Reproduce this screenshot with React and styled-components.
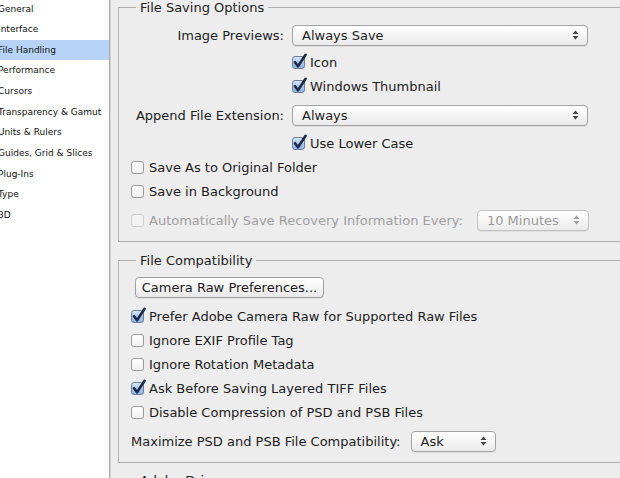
import React from 'react';
import styled, { createGlobalStyle } from 'styled-components';

const GlobalStyle = createGlobalStyle`
  html, body {
    margin: 0;
    padding: 0;
    background: #ededed;
  }
  body {
    font-family: "DejaVu Sans", "Liberation Sans", sans-serif;
    color: #1c1c1c;
  }
`;

const Window = styled.div`
  display: flex;
  width: 620px;
  height: 478px;
  overflow: hidden;
  background: #ededed;
`;

const Sidebar = styled.ul`
  list-style: none;
  margin: 0;
  padding: 0;
  width: 109px;
  flex: none;
  background: #fff;
  border-right: 1px solid #a9a9a9;
  box-shadow: 1px 0 0 #d6d6d6;
`;

const SideItem = styled.li`
  height: 20.67px;
  line-height: 20.67px;
  margin-left: -2px;
  font-size: 9px;
  white-space: nowrap;
  color: #111;
  background: ${p => (p.active ? '#b7d3f6' : 'transparent')};
  &:first-child {
    margin-top: -1.5px;
  }
`;

const Main = styled.div`
  flex: 1;
  min-width: 0;
  padding-left: 8px;
  overflow: hidden;
`;

const Group = styled.fieldset`
  margin: ${p => p.top || 0}px -40px 0 0;
  padding: 0;
  border: 1px solid #adadad;
  border-left-color: #b4b4b4;
  min-width: 0;
`;

const Legend = styled.legend`
  margin-left: 17px;
  padding: 0 4px;
  font-size: 13px;
  line-height: 15px;
  color: #1c1c1c;
`;

const Body = styled.div`
  display: flex;
  flex-direction: column;
  padding: ${p => p.pt}px 0 ${p => p.pb}px 12px;
`;

const FieldRow = styled.div`
  display: flex;
  align-items: center;
  height: 22px;
  margin-top: ${p => p.gap || 0}px;
  font-size: 13px;
  color: ${p => (p.disabled ? '#9a9a9a' : '#1c1c1c')};
`;

const FieldLabel = styled.span`
  width: ${p => (p.w ? `${p.w}px` : 'auto')};
  flex: none;
  text-align: right;
  white-space: nowrap;
`;

const SelectBox = styled.div`
  display: flex;
  align-items: center;
  justify-content: space-between;
  box-sizing: border-box;
  width: ${p => p.w}px;
  height: 21px;
  margin-left: ${p => p.ml || 8}px;
  padding: 0 8px 0 9px;
  border: 1px solid ${p => (p.disabled ? '#c2c2c2' : '#a2a2a2')};
  border-radius: 4px;
  background: linear-gradient(#ffffff, #f3f3f3 60%, #eaeaea);
  box-shadow: 0 1px 0 rgba(0, 0, 0, 0.06);
  font-size: 13px;
  color: ${p => (p.disabled ? '#9a9a9a' : '#1c1c1c')};
`;

const CheckRow = styled.label`
  display: flex;
  align-items: center;
  height: 24px;
  margin-top: ${p => p.gap || 0}px;
  padding-left: ${p => p.indent || 0}px;
  font-size: 13px;
  white-space: nowrap;
  color: ${p => (p.disabled ? '#a0a0a0' : '#1c1c1c')};
`;

const Box = styled.span`
  position: relative;
  box-sizing: border-box;
  width: 13px;
  height: 13px;
  flex: none;
  margin-right: 5px;
  border: 1px solid ${p => (p.disabled ? '#cdcdcd' : p.checked ? '#6f7f95' : '#9a9a9a')};
  border-radius: 3px;
  background: ${p =>
    p.checked
      ? 'linear-gradient(#d7e6f8, #a9c6ec 55%, #8fb4e6)'
      : p.disabled
      ? '#f2f2f2'
      : 'linear-gradient(#ffffff, #f0f0f0)'};
  svg {
    position: absolute;
    left: 0px;
    top: -3px;
    overflow: visible;
  }
`;

const PushButton = styled.button`
  box-sizing: border-box;
  width: 189px;
  height: 21px;
  margin-left: 4px;
  padding: 0;
  border: 1px solid #a0a0a0;
  border-radius: 4px;
  background: linear-gradient(#ffffff, #f2f2f2 60%, #e8e8e8);
  box-shadow: 0 1px 0 rgba(0, 0, 0, 0.06);
  font-family: inherit;
  font-size: 13px;
  color: #1c1c1c;
`;

const Arrows = ({ disabled }) => (
  <svg width="7" height="10" viewBox="0 0 7 10">
    <path d="M3.5 0.5 L6.5 4 L0.5 4 Z" fill={disabled ? '#9c9c9c' : '#444'} />
    <path d="M3.5 9.5 L6.5 6 L0.5 6 Z" fill={disabled ? '#9c9c9c' : '#444'} />
  </svg>
);

const Select = ({ value, w, ml, disabled }) => (
  <SelectBox w={w} ml={ml} disabled={disabled}>
    <span>{value}</span>
    <Arrows disabled={disabled} />
  </SelectBox>
);

const Check = ({ checked, disabled, children, indent, gap }) => (
  <CheckRow indent={indent} gap={gap} disabled={disabled}>
    <Box checked={checked} disabled={disabled}>
      {checked && (
        <svg width="14" height="15" viewBox="0 0 14 15">
          <path
            d="M2 8.2 L5 12.3 L12.6 0.8"
            fill="none"
            stroke="#1d2a48"
            strokeWidth="2.6"
            strokeLinecap="round"
            strokeLinejoin="round"
          />
        </svg>
      )}
    </Box>
    {children}
  </CheckRow>
);

const sideItems = [
  'General',
  'Interface',
  'File Handling',
  'Performance',
  'Cursors',
  'Transparency & Gamut',
  'Units & Rulers',
  'Guides, Grid & Slices',
  'Plug-Ins',
  'Type',
  '3D',
];

export default function App() {
  return (
    <>
      <GlobalStyle />
      <Window>
        <Sidebar>
          {sideItems.map(item => (
            <SideItem key={item} active={item === 'File Handling'}>
              {item}
            </SideItem>
          ))}
        </Sidebar>

        <Main>
          <Group>
            <Legend>File Saving Options</Legend>
            <Body pt={9} pb={10}>
              <FieldRow>
                <FieldLabel w={153}>Image Previews:</FieldLabel>
                <Select value="Always Save" w={296} />
              </FieldRow>
              <Check checked indent={161} gap={4}>Icon</Check>
              <Check checked indent={161}>Windows Thumbnail</Check>
              <FieldRow gap={6}>
                <FieldLabel w={153}>Append File Extension:</FieldLabel>
                <Select value="Always" w={296} />
              </FieldRow>
              <Check checked indent={161} gap={5}>Use Lower Case</Check>
              <Check>Save As to Original Folder</Check>
              <Check>Save in Background</Check>
              <FieldRow gap={6} disabled>
                <Check disabled>Automatically Save Recovery Information Every:</Check>
                <Select value="10 Minutes" w={112} ml={14} disabled />
              </FieldRow>
            </Body>
          </Group>

          <Group top={11}>
            <Legend>File Compatibility</Legend>
            <Body pt={8} pb={10}>
              <FieldRow>
                <PushButton>Camera Raw Preferences...</PushButton>
              </FieldRow>
              <Check checked gap={6}>Prefer Adobe Camera Raw for Supported Raw Files</Check>
              <Check>Ignore EXIF Profile Tag</Check>
              <Check>Ignore Rotation Metadata</Check>
              <Check checked>Ask Before Saving Layered TIFF Files</Check>
              <Check>Disable Compression of PSD and PSB Files</Check>
              <FieldRow gap={6}>
                <FieldLabel>Maximize PSD and PSB File Compatibility:</FieldLabel>
                <Select value="Ask" w={85} ml={10} />
              </FieldRow>
            </Body>
          </Group>

          <Group top={10}>
            <Legend>Adobe Drive</Legend>
            <Body pt={10} pb={10}>
              <Check>Enable Adobe Drive</Check>
            </Body>
          </Group>
        </Main>
      </Window>
    </>
  );
}
